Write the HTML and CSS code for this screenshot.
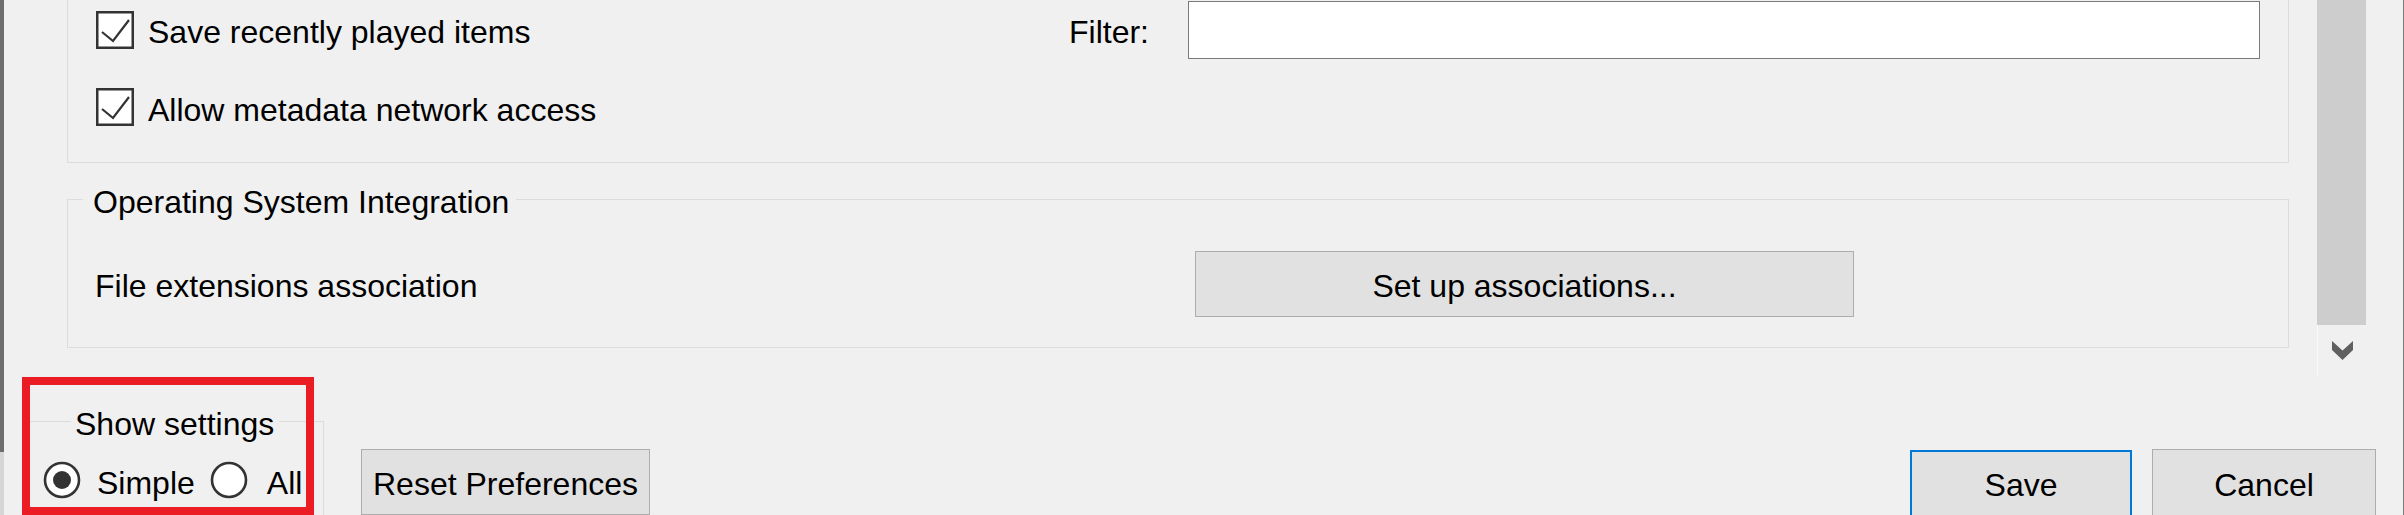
FILE: index.html
```html
<!DOCTYPE html>
<html lang="en">
<head>
<meta charset="utf-8">
<title>Preferences</title>
<link rel="stylesheet" href="styles.css">
</head>
<body>
<div class="edge-left"></div>
<div class="main">
  <div class="top">
    <div class="content">
      <div class="group group-media">
        <div class="row row-first">
          <label class="check">
            <svg class="box" viewBox="0 0 38 38" width="38" height="38"><rect x="1.25" y="1.25" width="35.5" height="35.5" fill="#fff" stroke="#333" stroke-width="2.5"/><polyline points="6,21 17,30 33,9" fill="none" stroke="#333" stroke-width="2.2"/></svg>
            <span class="lbl">Save recently played items</span>
          </label>
          <span class="lbl filter-label">Filter:</span>
          <div class="textinput"></div>
        </div>
        <div class="row row-second">
          <label class="check">
            <svg class="box" viewBox="0 0 38 38" width="38" height="38"><rect x="1.25" y="1.25" width="35.5" height="35.5" fill="#fff" stroke="#333" stroke-width="2.5"/><polyline points="6,21 17,30 33,9" fill="none" stroke="#333" stroke-width="2.2"/></svg>
            <span class="lbl">Allow metadata network access</span>
          </label>
        </div>
      </div>
      <div class="group group-os">
        <div class="group-title title-os">Operating System Integration</div>
        <div class="row row-assoc">
          <span class="lbl assoc-label">File extensions association</span>
          <button class="btn btn-assoc">Set up associations...</button>
        </div>
      </div>
    </div>
    <div class="scrollbar">
      <div class="thumb"></div>
      <div class="arrow">
        <svg viewBox="0 0 21 19" width="21" height="19"><polygon points="0,0 10.5,9.5 21,0 21,9 10.5,19 0,9" fill="#606060"/></svg>
      </div>
    </div>
  </div>
  <div class="bottom">
    <div class="group group-show">
      <div class="group-title title-show">Show settings</div>
      <div class="radios">
        <label class="radio">
          <svg viewBox="0 0 38 38" width="38" height="38"><circle cx="19" cy="19" r="17" fill="#fff" stroke="#333" stroke-width="2.6"/><circle cx="19" cy="19" r="9" fill="#333"/></svg>
          <span class="lbl">Simple</span>
        </label>
        <label class="radio radio-all">
          <svg viewBox="0 0 38 38" width="38" height="38"><circle cx="19" cy="19" r="17" fill="#fff" stroke="#333" stroke-width="2.6"/></svg>
          <span class="lbl">All</span>
        </label>
      </div>
    </div>
    <button class="btn btn-reset">Reset Preferences</button>
    <button class="btn btn-save">Save</button>
    <button class="btn btn-cancel">Cancel</button>
    <div class="highlight"></div>
  </div>
</div>
<div class="edge-right"></div>
</body>
</html>
```

FILE: styles.css
```css
* { box-sizing: border-box; }
html, body { margin: 0; padding: 0; }
body {
  width: 2404px;
  height: 515px;
  overflow: hidden;
  background: #f0f0f0;
  display: flex;
  font-family: "Liberation Sans", Arial, sans-serif;
  font-size: 32px;
  line-height: 36px;
  color: #000;
}
.edge-left {
  width: 4px;
  flex: none;
  background: linear-gradient(to bottom, #6e6e6e 0, #6e6e6e 452px, #d6d6d6 452px, #d6d6d6 100%);
}
.edge-right {
  width: 1px;
  flex: none;
  background: #7a7a7a;
}
.main {
  flex: 1;
  position: relative;
  display: flex;
  flex-direction: column;
  height: 515px;
  overflow: hidden;
}
.top {
  display: flex;
  height: 377px;
  flex: none;
}
.content {
  margin-left: 63px;
  width: 2222px;
  flex: none;
}
.group { border: 1px solid #dcdcdc; }
.group-media {
  border-top: none;
  height: 163px;
  padding: 0 28px;
}
.row {
  display: flex;
  align-items: center;
}
.row-first { height: 59px; }
.row-second { height: 58px; margin-top: 19px; }
.check, .radio {
  display: flex;
  align-items: center;
}
.check svg { flex: none; margin-right: 14px; }
.lbl { padding-top: 5px; white-space: nowrap; }
.filter-label { margin-left: auto; margin-right: 39px; }
.textinput {
  width: 1072px;
  height: 58px;
  align-self: flex-end;
  background: #fff;
  border: 1px solid #7a7a7a;
}
.group-os {
  margin-top: 36px;
  height: 149px;
}
.group-title {
  width: fit-content;
  margin-top: -16px;
  background: #f0f0f0;
  white-space: nowrap;
}
.title-os { margin-left: 15px; padding: 0 7px 0 10px; }
.row-assoc {
  margin-top: 31px;
  padding-left: 27px;
  align-items: baseline;
}
.assoc-label { flex: 0 0 1100px; padding-top: 0; }
.btn {
  font: inherit;
  line-height: 36px;
  color: #000;
  background: #e1e1e1;
  border: 1px solid #adadad;
  padding: 0;
  margin: 0;
  display: flex;
  align-items: center;
  justify-content: center;
  flex: none;
  white-space: nowrap;
}
.btn-assoc { width: 659px; height: 66px; padding-top: 4px; }
.scrollbar {
  margin-left: 28px;
  width: 49px;
  height: 376px;
  flex: none;
  display: flex;
  flex-direction: column;
}
.thumb { height: 325px; background: #cdcdcd; flex: none; }
.arrow {
  height: 51px;
  border-left: 1px solid #fafafa;
  display: flex;
  align-items: center;
  justify-content: center;
}
.bottom {
  display: flex;
  align-items: flex-start;
  height: 138px;
  flex: none;
  overflow: hidden;
}
.group-show {
  margin-left: 20px;
  margin-top: 44px;
  width: 300px;
  height: 94px;
  border-bottom: none;
  flex: none;
}
.title-show { margin-left: 46px; padding: 0 5px 0 4px; }
.radios {
  display: flex;
  align-items: center;
  height: 38px;
  margin-top: 19px;
  padding-left: 18px;
}
.radio svg { flex: none; margin-right: 16px; }
.radio-all { margin-left: 15px; }
.radio-all svg { margin-right: 19px; }
.btn-reset { margin-left: 37px; margin-top: 72px; width: 289px; height: 66px; padding-top: 4px; }
.btn-save {
  margin-left: auto;
  margin-top: 73px;
  width: 222px;
  height: 65px;
  border: 2px solid #0078d7;
  border-bottom: none;
  padding-top: 2px;
}
.btn-cancel {
  margin-left: 20px;
  margin-right: 27px;
  margin-top: 72px;
  width: 224px;
  height: 66px;
  border-bottom: none;
  padding-top: 4px;
}
.highlight {
  position: absolute;
  left: 18px;
  top: 377px;
  width: 292px;
  height: 138px;
  border: 8px solid #ec1c24;
}
```
